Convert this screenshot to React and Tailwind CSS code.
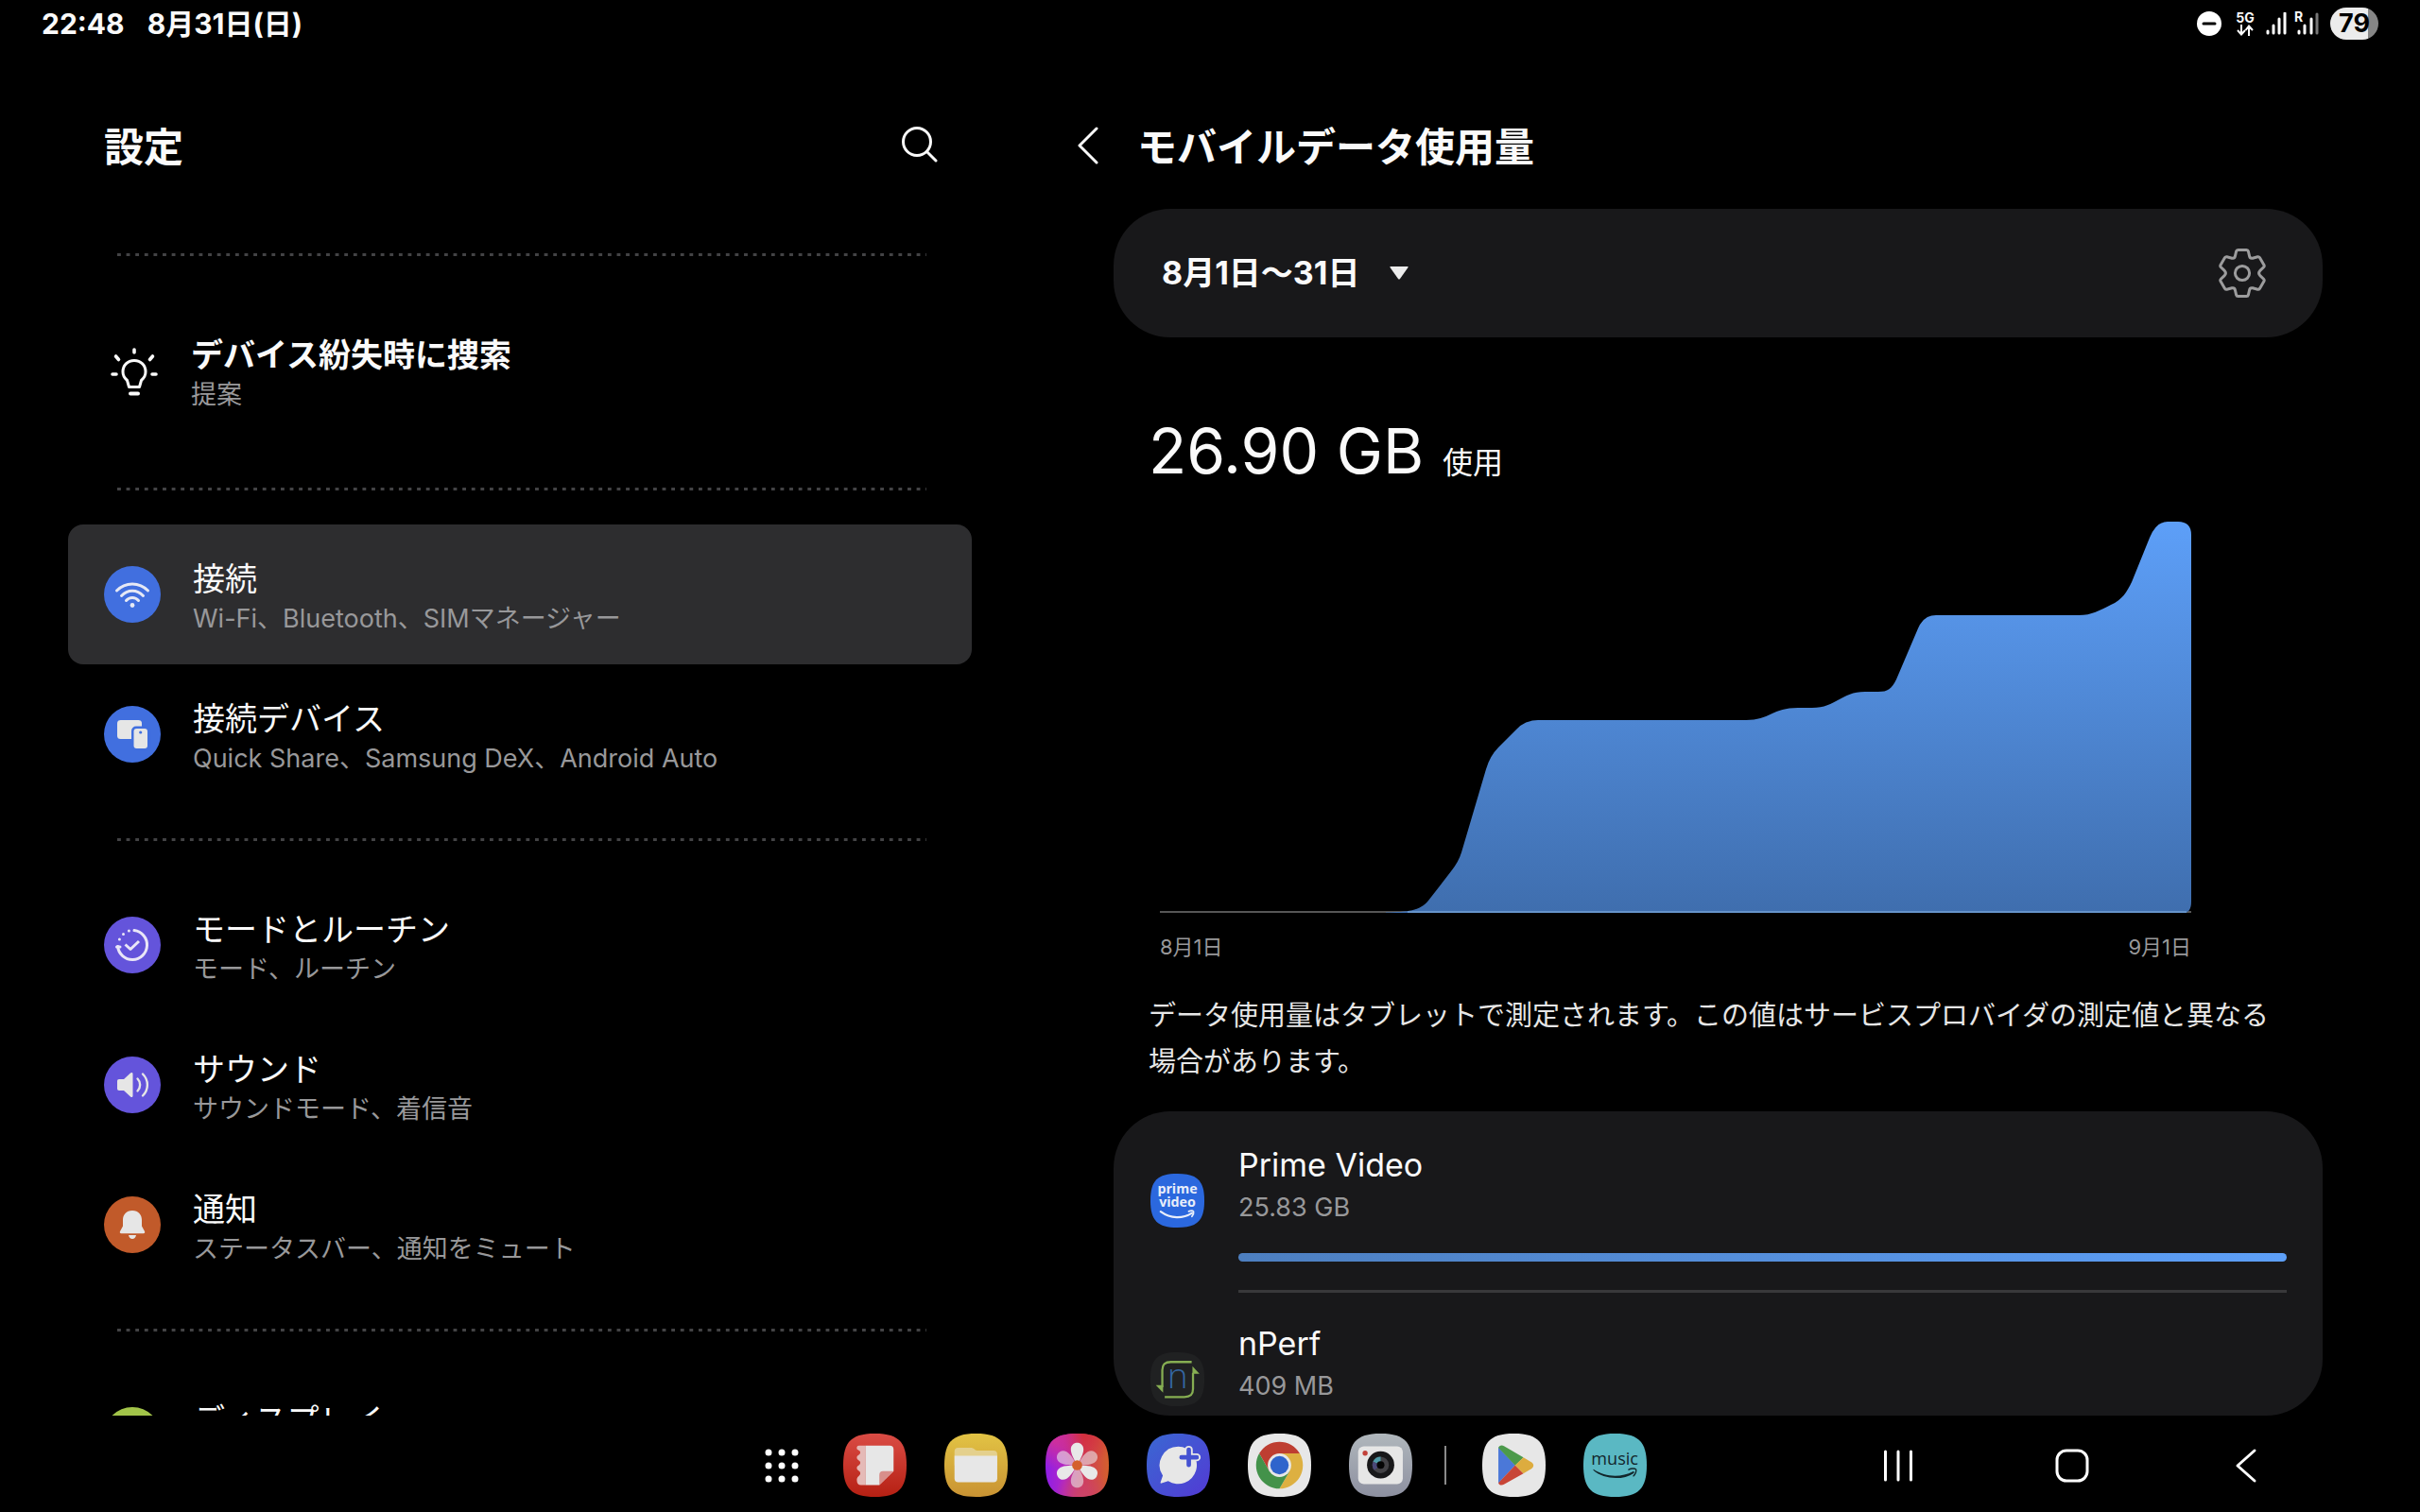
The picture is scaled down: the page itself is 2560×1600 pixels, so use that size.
import { useId } from "react";

const SQUIRCLE =
  "M100 0C174 0 200 26 200 100S174 200 100 200 0 174 0 100 26 0 100 0Z";

/* ---------- settings list icons ---------- */

function WifiIcon() {
  return (
    <svg viewBox="0 0 60 60" className="h-full w-full" fill="none" stroke="#e6e9f5" strokeWidth="3" strokeLinecap="round">
      <path d="M13.5 26C22.5 16.5 37.5 16.5 46.500 26" />
      <path d="M18.500 31.500C25 24.500 35 24.500 41.500 31.500" />
      <path d="M23.500 36.500C27 32.500 33 32.500 36.500 36.500" />
      <circle cx="30" cy="41.500" r="2.400" fill="#e6e9f5" stroke="none" />
    </svg>
  );
}

function DevicesIcon() {
  return (
    <svg viewBox="0 0 60 60" className="h-full w-full">
      <rect x="14" y="15" width="26" height="20" rx="3.500" fill="#e6e6e6" />
      <rect x="29" y="21.500" width="20.500" height="26" rx="5" fill="#416fdf" />
      <rect x="31.500" y="24" width="14.500" height="21" rx="3" fill="#e6e6e6" />
      <circle cx="38.700" cy="28" r="1.600" fill="#416fdf" />
    </svg>
  );
}

function ModesIcon() {
  return (
    <svg viewBox="0 0 60 60" className="h-full w-full" fill="none" stroke="#e9e6f7" strokeWidth="3" strokeLinecap="round" strokeLinejoin="round">
      <path d="M32 14.600A15.500 15.500 0 1 1 14.600 31.500" />
      <path d="M26.400 15v.1M20.500 18.400v.1M16.400 24v.1M13.500 32h3.500" />
      <path d="M22.500 29.500L28 34.500L37 26" strokeLinecap="butt" />
    </svg>
  );
}

function SoundIcon() {
  return (
    <svg viewBox="0 0 60 60" className="h-full w-full">
      <path d="M16 24H21L28 17.500C29.500 16.500 30.500 17 30.500 18.500V41.500C30.500 43 29.500 43.500 28 42.500L21 36H16C14.800 36 14 35.200 14 34V26C14 24.800 14.800 24 16 24Z" fill="#e6e6e6" />
      <path d="M35.500 23.500C39 27 39 33 35.500 36.500M41 18.500C47.500 25 47.500 35 41 41.500" fill="none" stroke="#e6e6e6" strokeWidth="2.400" strokeLinecap="round" />
    </svg>
  );
}

function BellIcon() {
  return (
    <svg viewBox="0 0 60 60" className="h-full w-full" fill="#e6e6e6">
      <path d="M30 15C36.500 15 40 19.500 40 25V31.500L43 37C43.600 38.400 43 39.200 41.800 39.200H18.200C17 39.200 16.400 38.400 17 37L20 31.500V25C20 19.500 23.500 15 30 15Z" />
      <path d="M26 41H34C33.500 43.500 32 45 30 45S26.500 43.500 26 41Z" />
    </svg>
  );
}

function BulbIcon() {
  return (
    <svg viewBox="0 0 50 52" className="h-[52px] w-[50px]" fill="none" stroke="#fafafa" strokeWidth="3" strokeLinecap="round" strokeLinejoin="round">
      <path d="M19.500 41.500L17.500 34.500C14.500 32 13 29 13 25.500C13 18.500 18 13.500 25 13.500S37 18.500 37 25.500C37 29 35.500 32 32.500 34.500L30.500 41.500Z" />
      <path d="M21 48.500H29" strokeWidth="4" />
      <path d="M25 2V5M5.500 9L8.500 12.500M44.500 9L41.500 12.500M2 28H6M44 28H48" strokeWidth="3.600" />
    </svg>
  );
}

function SearchIcon() {
  return (
    <svg viewBox="0 0 38 38" className="h-[38px] w-[38px]" fill="none" stroke="#fafafa" strokeWidth="3" strokeLinecap="round">
      <circle cx="16" cy="16" r="14.500" />
      <path d="M26.500 26.500L36 36" />
    </svg>
  );
}

function GearIcon() {
  return (
    <svg viewBox="0 0 50 52" className="h-[52px] w-[50px]" fill="none" stroke="#9c9c9d" strokeWidth="3" strokeLinejoin="round">
      <path d="M20.500 1.500H29.500Q31 1.500 31.400 3L32.600 8.200Q33.200 10.800 35.900 10.200L41.300 8.700Q42.600 8.400 43.400 9.600L48 17.400Q48.600 18.700 47.600 19.700L43.800 23.400Q41.400 26 43.800 28.600L47.600 32.300Q48.600 33.300 48 34.600L43.400 42.400Q42.600 43.600 41.300 43.300L35.900 41.800Q33.200 41.200 32.600 43.800L31.400 49Q31 50.500 29.500 50.500H20.500Q19 50.500 18.600 49L17.400 43.800Q16.800 41.200 14.100 41.800L8.700 43.300Q7.400 43.600 6.600 42.400L2 34.600Q1.400 33.300 2.400 32.300L6.200 28.600Q8.600 26 6.200 23.400L2.400 19.700Q1.400 18.700 2 17.400L6.600 9.600Q7.400 8.400 8.700 8.700L14.100 10.200Q16.800 10.800 17.400 8.200L18.600 3Q19 1.500 20.500 1.500Z" />
      <circle cx="25" cy="26" r="7.600" />
    </svg>
  );
}

/* ---------- app icons ---------- */

function AppTile({ from, to, diagonal, children }) {
  const id = useId();
  return (
    <svg viewBox="0 0 200 200" className="h-full w-full">
      <defs>
        <linearGradient id={id} x1="0" y1="0" x2={diagonal ? "1" : "0"} y2="1">
          <stop offset="0" stopColor={from} />
          <stop offset="1" stopColor={to} />
        </linearGradient>
      </defs>
      <path d={SQUIRCLE} fill={`url(#${id})`} />
      {children}
    </svg>
  );
}

function NotesApp() {
  return (
    <AppTile from="#da4c45" to="#b52013">
      <path d="M70 38H50C44 38 42 43 43 48C44 53 54 52 54 60C54 68 43 68 43 76C43 84 54 84 54 92C54 101 43 101 43 109C43 117 54 117 54 125C54 134 43 134 43 146C43 157 48 163 56 163H70Z" fill="#e5bab7" />
      <path d="M70 38H147C155 38 159 42 159 50V119L114 163H70Z" fill="#e7e7e7" />
      <path d="M159 119H126C118 119 114 123 114 131V163Z" fill="#d88f8b" />
    </AppTile>
  );
}

function FilesApp() {
  return (
    <AppTile from="#e2c344" to="#c99333">
      <path d="M32 57C32 49 36 45 44 45H82C88 45 92 47 96 50C99 53 102 54 107 54H155C163 54 167 58 167 66V100H32Z" fill="#e4d08d" />
      <path d="M32 70H167V142C167 150 163 154 155 154H44C36 154 32 150 32 142Z" fill="#e7e7e7" />
    </AppTile>
  );
}

const petals = [
  { angle: 60, opacity: 0.6 },
  { angle: 180, opacity: 0.6 },
  { angle: 300, opacity: 0.6 },
  { angle: 0, opacity: 1 },
  { angle: 120, opacity: 1 },
  { angle: 240, opacity: 1 },
];

function GalleryApp() {
  return (
    <svg viewBox="0 0 200 200" className="h-full w-full">
      <defs>
        <linearGradient id="gal-base" x1="0" y1="0" x2="1" y2="0">
          <stop offset="0" stopColor="#8e1ee6" />
          <stop offset="0.300" stopColor="#b327c4" />
          <stop offset="0.600" stopColor="#cf3a5c" />
          <stop offset="1" stopColor="#d4602c" />
        </linearGradient>
        <radialGradient id="gal-top" cx="0.600" cy="0" r="0.500">
          <stop offset="0" stopColor="#d42f3c" />
          <stop offset="1" stopColor="#d42f3c" stopOpacity="0" />
        </radialGradient>
        <radialGradient id="gal-corner" cx="0.150" cy="0.100" r="0.450">
          <stop offset="0" stopColor="#d0309a" />
          <stop offset="1" stopColor="#d0309a" stopOpacity="0" />
        </radialGradient>
        <radialGradient id="gal-bottom" cx="0.600" cy="1" r="0.450">
          <stop offset="0" stopColor="#cc4468" />
          <stop offset="1" stopColor="#cc4468" stopOpacity="0" />
        </radialGradient>
      </defs>
      <path d={SQUIRCLE} fill="url(#gal-base)" />
      <path d={SQUIRCLE} fill="url(#gal-top)" />
      <path d={SQUIRCLE} fill="url(#gal-corner)" />
      <path d={SQUIRCLE} fill="url(#gal-bottom)" />
      {petals.map((petal) => (
        <path
          key={petal.angle}
          d="M100 100C92 84 80 66 80 50C80 37 89 29 100 29S120 37 120 50C120 66 108 84 100 100Z"
          transform={`rotate(${petal.angle} 100 100)`}
          fill="#e8e8e8"
          fillOpacity={petal.opacity}
        />
      ))}
      <circle cx="100" cy="100" r="16" fill="#d4602c" />
    </svg>
  );
}

function MessagesApp() {
  return (
    <AppTile from="#3a68d2" to="#523ad4" diagonal>
      <path d="M100 41A59 59 0 1 1 68 150L47 157C44 158 43 156 44 153L51 133A59 59 0 0 1 100 41Z" fill="#e7e7e7" />
      <path d="M133 51V99M110 75H158" stroke="#e7e7e7" strokeWidth="25" strokeLinecap="round" />
      <path d="M133 51V99M110 75H158" stroke="#4552d2" strokeWidth="14" strokeLinecap="round" />
    </AppTile>
  );
}

function ChromeApp() {
  return (
    <AppTile from="#e7e7e7" to="#e7e7e7">
      <path d="M36 63A74 74 0 0 1 164 63H100L68 118.500Z" fill="#be3e31" />
      <path d="M164 63A74 74 0 0 1 100 174L132 118.500L100 63Z" fill="#ddb041" />
      <path d="M100 174A74 74 0 0 1 36 63L68 118.500H132Z" fill="#43924a" />
      <circle cx="100" cy="100" r="37" fill="#e7e7e7" />
      <circle cx="100" cy="100" r="29" fill="#2f64cc" />
    </AppTile>
  );
}

function CameraApp() {
  return (
    <AppTile from="#b0b7bc" to="#8d90a0">
      <rect x="29" y="40" width="141" height="120" rx="18" fill="#e6e6e6" />
      <circle cx="51" cy="62" r="8" fill="#c2413a" />
      <circle cx="100" cy="99" r="43" fill="#18181a" />
      <circle cx="100" cy="99" r="26" fill="#434246" />
      <path d="M100 99L76 89A26 26 0 0 1 100 73Z" fill="#4f9aa8" />
      <path d="M100 99L80 116A26 26 0 0 1 76 89Z" fill="#4a4878" />
      <circle cx="100" cy="99" r="12" fill="#050505" />
    </AppTile>
  );
}

function PlayApp() {
  return (
    <AppTile from="#e7e7e7" to="#e7e7e7">
      <path d="M51 43V157L104 100Z" fill="#4b78d8" />
      <path d="M51 45C53 37 62 35 70 40L130 75L104 101Z" fill="#4c9a4b" />
      <path d="M51 156C53 164 62 165 70 160L130 126L104 100Z" fill="#c84536" />
      <path d="M130 75L155 90C164 96 164 105 155 111L130 126L104 100Z" fill="#ddac3f" />
    </AppTile>
  );
}

function MusicApp() {
  return (
    <AppTile from="#5ab8c3" to="#5ab8c3">
      <text x="99" y="98" textAnchor="middle" fontSize="54" fill="#12262b" className="font-['Open_Sans',sans-serif] font-medium">
        music
      </text>
      <path d="M32 113C70 139 120 139 156 120C160 118 162 122 159 125C125 148 65 146 31 116Z" fill="#12262b" />
      <path d="M143 114C152 109 163 110 166 113C168 118 165 128 158 134" fill="none" stroke="#12262b" strokeWidth="4" strokeLinecap="round" />
    </AppTile>
  );
}

function PrimeVideoApp() {
  return (
    <AppTile from="#2b68de" to="#2b68de">
      <text x="100" y="72" textAnchor="middle" fontSize="50" fill="#e8eefa" className="font-['Open_Sans',sans-serif] font-bold">
        prime
      </text>
      <text x="100" y="123" textAnchor="middle" fontSize="50" fill="#e8eefa" className="font-['Open_Sans',sans-serif] font-bold">
        video
      </text>
      <path d="M38 141C75 168 120 168 154 146" fill="none" stroke="#e8eefa" strokeWidth="8" strokeLinecap="round" />
      <path d="M142 140C150 137 158 138 160 141C161 146 158 154 154 159" fill="none" stroke="#e8eefa" strokeWidth="6" strokeLinecap="round" />
    </AppTile>
  );
}

function NPerfApp() {
  return (
    <AppTile from="#202122" to="#202122">
      <path d="M153 36H76C52 36 44 46 44 66V130" fill="none" stroke="#86ae52" strokeWidth="8" />
      <path d="M20 122L47 150V122Z" fill="#86ae52" />
      <path d="M53 166H126C150 166 158 156 158 136V76" fill="none" stroke="#86ae52" strokeWidth="8" />
      <path d="M156 52L182 80H156Z" fill="#86ae52" />
      <text x="101" y="134" textAnchor="middle" fontSize="128" fill="#3568a4" className="font-['Open_Sans',sans-serif] font-light">
        n
      </text>
    </AppTile>
  );
}

/* ---------- data ---------- */

const connectionItems = [
  { title: "接続", text: "Wi-Fi、Bluetooth、SIMマネージャー", icon: WifiIcon, color: "bg-[#416fdf]", active: true },
  { title: "接続デバイス", text: "Quick Share、Samsung DeX、Android Auto", icon: DevicesIcon, color: "bg-[#416fdf]" },
];

const soundItems = [
  { title: "モードとルーチン", text: "モード、ルーチン", icon: ModesIcon, color: "bg-[#6454db]" },
  { title: "サウンド", text: "サウンドモード、着信音", icon: SoundIcon, color: "bg-[#6454db]" },
  { title: "通知", text: "ステータスバー、通知をミュート", icon: BellIcon, color: "bg-[#c15a2a]" },
];

const displayItems = [{ title: "ディスプレイ", color: "bg-[#a2c449]" }];

const usageItems = [
  { name: "Prime Video", used: "25.83 GB", percent: 100, icon: PrimeVideoApp },
  { name: "nPerf", used: "409 MB", percent: 2, icon: NPerfApp },
];

const dockApps = [
  { name: "Notes", icon: NotesApp },
  { name: "マイファイル", icon: FilesApp },
  { name: "ギャラリー", icon: GalleryApp },
  { name: "メッセージ", icon: MessagesApp },
  { name: "Chrome", icon: ChromeApp },
  { name: "カメラ", icon: CameraApp },
];

const recentApps = [
  { name: "Play ストア", icon: PlayApp },
  { name: "Amazon Music", icon: MusicApp },
];

/* ---------- parts ---------- */

function StatusBar() {
  return (
    <header className="flex h-[50px] shrink-0 items-center justify-between pr-11 pl-11">
      <div className="flex gap-6 text-[30px] leading-[50px] font-bold">
        <span>22:48</span>
        <span>8月31日(日)</span>
      </div>
      <div className="flex items-center">
        <svg viewBox="0 0 26 26" className="mr-[15px] h-[26px] w-[26px]">
          <circle cx="13" cy="13" r="13" fill="#fff" />
          <path d="M7 13H19" stroke="#000" strokeWidth="3" strokeLinecap="round" />
        </svg>
        <div className="mr-3 flex w-5 flex-col items-center">
          <span className="text-[14px] leading-[14px] font-bold">5G</span>
          <svg viewBox="0 0 18 12" className="h-3 w-[18px]" fill="none" stroke="#fff" strokeWidth="2">
            <path d="M5 0V10M1 6L5 10.500L9 6M13 12V2M9.500 6L13 1.500L17 6" />
          </svg>
        </div>
        <svg viewBox="0 0 22 24" className="mr-[10px] h-6 w-[22px]" stroke="#fff" strokeWidth="3" strokeLinecap="round">
          <path d="M2 20V22M8 14V22M14 7V22M20 1V22" />
        </svg>
        <div className="relative mr-3 h-6 w-6">
          <svg viewBox="0 0 24 24" className="h-6 w-6" stroke="#fff" strokeWidth="3" strokeLinecap="round">
            <path d="M3 20V22M9 14V22M16 7V22" />
            <path d="M22 2V22" stroke="#777" />
          </svg>
          <span className="absolute -top-[2px] -left-[2px] text-[14px] leading-[14px] font-bold">R</span>
        </div>
        <span className="flex h-[34px] w-[51px] items-center justify-center rounded-full bg-linear-to-r from-[#ececec] from-78% to-[#868686] to-78% text-[27px] leading-[34px] font-bold text-black">
          79
        </span>
      </div>
    </header>
  );
}

function DottedDivider() {
  return (
    <hr className="mr-12 ml-[52px] h-[3px] border-0 bg-[linear-gradient(to_right,#434345_4px,transparent_4px)] bg-[length:calc(100%/89)_3px]" />
  );
}

function SettingsRow({ item }) {
  const Icon = item.icon;
  return (
    <li>
      <a
        href="#"
        className={`flex h-[148px] rounded-2xl pl-[38px] ${item.active ? "bg-[#2d2d2f]" : ""}`}
      >
        <span className={`mt-11 h-[60px] w-[60px] shrink-0 rounded-full ${item.color}`}>
          {Icon && <Icon />}
        </span>
        <span className="flex flex-col pt-9 pl-[34px]">
          <span className="text-[34px] leading-[44px]">{item.title}</span>
          <span className="text-[27px] leading-[40px] text-[#98989a]">{item.text}</span>
        </span>
      </a>
    </li>
  );
}

function SettingsGroup({ items }) {
  return (
    <ul className="py-9">
      {items.map((item) => (
        <SettingsRow key={item.title} item={item} />
      ))}
    </ul>
  );
}

function SettingsPane() {
  return (
    <nav className="flex w-[42.5%] flex-col overflow-hidden pr-[60px] pl-[72px]">
      <div className="flex h-[218px] shrink-0 items-start justify-between pt-[78px] pr-9 pl-[38px]">
        <h1 className="text-[42px] leading-[56px] font-bold">設定</h1>
        <button type="button" aria-label="検索" className="pt-1.5">
          <SearchIcon />
        </button>
      </div>
      <div className="shrink-0">
        <DottedDivider />
        <a href="#" className="flex h-[245px] items-center pl-[45px]">
          <BulbIcon />
          <span className="flex flex-col pt-1 pl-[35px]">
            <span className="text-[34px] leading-[44px] font-bold">デバイス紛失時に捜索</span>
            <span className="text-[27px] leading-[40px] text-[#98989a]">提案</span>
          </span>
        </a>
        <DottedDivider />
        <SettingsGroup items={connectionItems} />
        <DottedDivider />
        <SettingsGroup items={soundItems} />
        <DottedDivider />
        <SettingsGroup items={displayItems} />
      </div>
    </nav>
  );
}

function UsageChart() {
  return (
    <div className="mr-[139px] ml-[49px]">
      <svg viewBox="0 0 1091 414" preserveAspectRatio="none" className="block h-[414px] w-full">
        <defs>
          <linearGradient id="usage-fill" x1="0" y1="0" x2="0" y2="1">
            <stop offset="0" stopColor="#5d9ff8" />
            <stop offset="1" stopColor="#3f6eae" />
          </linearGradient>
        </defs>
        <path d="M0 413H1091" stroke="#565656" strokeWidth="2" />
        <path
          d="M239 413.500C262 413 275 412 284 401L308 370Q316 360 319 350L345 262Q349 248 358 239L377 220Q386 210 400 210H620C645 210 648 197 675 197H690C716 197 720 180 746 180H760C770 180 774 177 779 167L802 113Q808 99 821 99H972C986 99 994 94 1006 88C1018 83 1023 74 1028 64L1047 17Q1054 0 1066 0H1077Q1091 0 1091 14V402Q1091 414 1083 414H239Z"
          fill="url(#usage-fill)"
        />
        <path d="M262 413H1086" stroke="#6593c9" strokeWidth="2" />
      </svg>
      <div className="flex justify-between pt-4 text-[22px] leading-[40px] text-[#98989a]">
        <span>8月1日</span>
        <span>9月1日</span>
      </div>
    </div>
  );
}

function UsageRow({ item, last }) {
  const Icon = item.icon;
  return (
    <li className="flex h-[192px] pr-[38px] pl-[39px]">
      <span className="mt-[66px] h-[57px] w-[57px] shrink-0">
        <Icon />
      </span>
      <div className={`ml-9 flex flex-1 flex-col border-b-[3px] pt-[33px] ${last ? "border-transparent" : "border-[#38383a]"}`}>
        <span className="text-[34px] leading-[48px]">{item.name}</span>
        <span className="text-[27px] leading-[42px] text-[#98989a]">{item.used}</span>
        <div role="progressbar" aria-label={item.name} aria-valuenow={item.percent} className="mt-[27px] h-[9px]">
          <div
            className="h-full rounded-full bg-linear-to-r from-[#4d7fc0] to-[#5d9ff8]"
            style={{ width: `${item.percent}%` }}
          />
        </div>
      </div>
    </li>
  );
}

function UsagePane() {
  return (
    <main className="flex flex-1 flex-col overflow-hidden pr-[103px] pl-[52px]">
      <div className="flex h-[171px] shrink-0 items-start pt-[78px]">
        <button type="button" aria-label="戻る" className="w-[63px] pt-1.5">
          <svg viewBox="0 0 22 40" className="h-10 w-[22px]" fill="none" stroke="#fafafa" strokeWidth="3" strokeLinecap="round" strokeLinejoin="round">
            <path d="M20 2L2 20L20 38" />
          </svg>
        </button>
        <h2 className="text-[42px] leading-[56px] font-bold">モバイルデータ使用量</h2>
      </div>

      {/* SCROLL AREA */}
      <div className="ml-[38px] min-h-0 flex-1 overflow-hidden rounded-b-[60px]">
        <section className="flex h-[136px] items-center justify-between rounded-[60px] bg-[#18181a] pr-[60px] pl-[51px]">
          <label className="flex items-center gap-[31px]">
            <select aria-label="期間" className="appearance-none bg-transparent text-[34px] leading-[48px] font-bold">
              <option>8月1日〜31日</option>
            </select>
            <svg viewBox="0 0 20 14" className="h-[14px] w-5">
              <path d="M1 0H19Q20 0 19.500 1L11 13Q10 14 9 13L.5 1Q0 0 1 0Z" fill="#ececec" />
            </svg>
          </label>
          <button type="button" aria-label="設定">
            <GearIcon />
          </button>
        </section>

        <p className="flex items-baseline gap-5 pt-[74px] pl-[37px]">
          <span className="text-[66px] leading-[92px]">26.90 GB</span>
          <span className="text-[32px] leading-[40px]">使用</span>
        </p>

        <div className="pt-[29px]">
          <UsageChart />
        </div>

        <p className="pt-7 pr-[39px] pb-7 pl-[37px] text-[29px] leading-[49px] text-[#e6e6e6]">
          データ使用量はタブレットで測定されます。この値はサービスプロバイダの測定値と異なる場合があります。
        </p>

        <ul className="-space-y-[3px] rounded-[60px] bg-[#18181a]">
          {usageItems.map((item, i) => (
            <UsageRow key={item.name} item={item} last={i === usageItems.length - 1} />
          ))}
        </ul>
      </div>
    </main>
  );
}

function AppButton({ app }) {
  const Icon = app.icon;
  return (
    <button type="button" aria-label={app.name} className="h-[67px] w-[67px]">
      <Icon />
    </button>
  );
}

function Taskbar() {
  return (
    <footer className="grid h-[102px] shrink-0 grid-cols-[1fr_auto_1fr] items-center pt-[3px]">
      <div />
      <div className="flex items-center gap-10 pr-4">
        <button type="button" aria-label="アプリ一覧" className="flex w-[49px] justify-center">
          <svg viewBox="0 0 36 36" className="h-9 w-9" stroke="#fff" strokeWidth="7" strokeLinecap="round">
            <path d="M4 4h.01M18 4h.01M32 4h.01M4 18h.01M18 18h.01M32 18h.01M4 32h.01M18 32h.01M32 32h.01" />
          </svg>
        </button>
        {dockApps.map((app) => (
          <AppButton key={app.name} app={app} />
        ))}
        <div className="-mr-0.5 -ml-1.5 h-[41px] w-0.5 bg-[#8a8a8a]" />
        {recentApps.map((app) => (
          <AppButton key={app.name} app={app} />
        ))}
      </div>
      <div className="flex items-center justify-end gap-36 pr-[164px]">
        <button type="button" aria-label="履歴" className="w-10">
          <svg viewBox="0 0 40 40" className="h-10 w-10" stroke="#fff" strokeWidth="3" strokeLinecap="round">
            <path d="M6.500 5V35M20 5V35M33.500 5V35" />
          </svg>
        </button>
        <button type="button" aria-label="ホーム" className="w-10">
          <svg viewBox="0 0 40 40" className="h-10 w-10" fill="none" stroke="#fff" strokeWidth="3">
            <rect x="4" y="4" width="32" height="32" rx="10" />
          </svg>
        </button>
        <button type="button" aria-label="戻る" className="w-10">
          <svg viewBox="0 0 40 40" className="h-10 w-10" fill="none" stroke="#fff" strokeWidth="3" strokeLinecap="round" strokeLinejoin="round">
            <path d="M29 4L11 20L29 36" />
          </svg>
        </button>
      </div>
    </footer>
  );
}

export default function App() {
  return (
    <div lang="ja" className="flex h-screen flex-col overflow-hidden bg-black font-['Inter','Noto_Sans_CJK_JP',sans-serif] text-[#fafafa]">
      <StatusBar />
      <div className="flex min-h-0 flex-1">
        <SettingsPane />
        <UsagePane />
      </div>
      <Taskbar />
    </div>
  );
}
